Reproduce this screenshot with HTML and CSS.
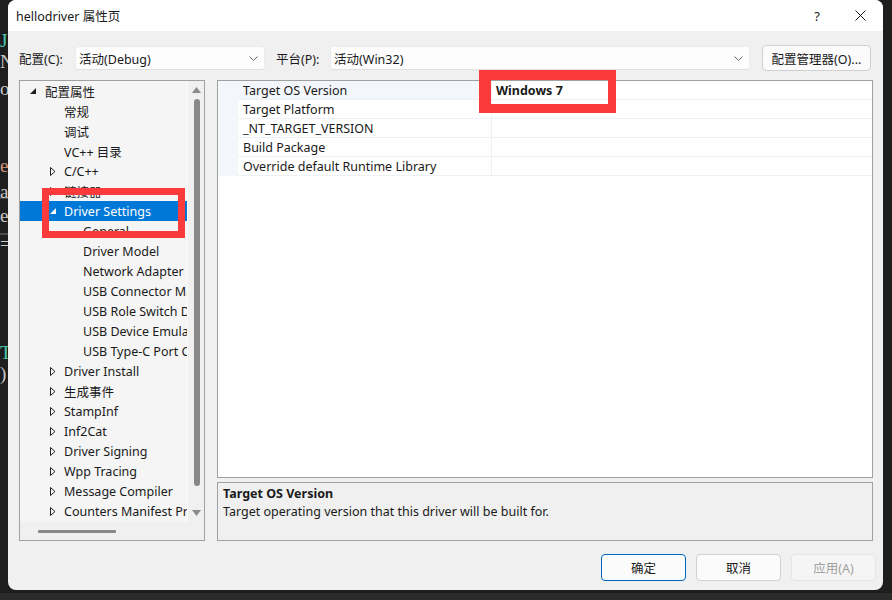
FILE: index.html
```html
<!DOCTYPE html>
<html lang="zh-CN">
<head>
<meta charset="UTF-8">
<meta name="viewport" content="width=device-width, initial-scale=1.0">
<title>hellodriver 属性页</title>
<link rel="stylesheet" href="styles.css">
</head>
<body>

<div class="screen">
    <div class="desk">
        <!-- editor window peeking out behind the dialog -->
        <div class="code">
            <div class="ln c-type l1">J</div>
            <div class="ln l2">N</div>
            <div class="ln l3">o</div>
            <div class="ln c-str l4">e</div>
            <div class="ln l5">a</div>
            <div class="ln cur l6">e</div>
            <div class="ln l7">=</div>
            <div class="ln c-type l8">T</div>
            <div class="ln l9">)</div>
        </div>

        <div class="dialog">
            <div class="titlebar">
                <span class="title">hellodriver 属性页</span>
                <span class="tb-btn tb-help">?</span>
                <span class="tb-btn tb-close">
                    <svg width="11" height="11" viewBox="0 0 11 11"><path d="M0.5 0.5 L10.5 10.5 M10.5 0.5 L0.5 10.5" stroke="#1a1a1a" stroke-width="1" fill="none"/></svg>
                </span>
            </div>

            <div class="body">
                <div class="config-row">
                    <span class="lbl lbl-cfg">配置(C):</span>
                    <div class="combo combo-cfg">
                        <span>活动(Debug)</span>
                        <svg width="9" height="5" viewBox="0 0 9 5"><path d="M0.5 0.5 L4.5 4.5 L8.5 0.5" stroke="#6a6a6a" fill="none"/></svg>
                    </div>
                    <span class="lbl lbl-plat">平台(P):</span>
                    <div class="combo combo-plat">
                        <span>活动(Win32)</span>
                        <svg width="9" height="5" viewBox="0 0 9 5"><path d="M0.5 0.5 L4.5 4.5 L8.5 0.5" stroke="#6a6a6a" fill="none"/></svg>
                    </div>
                    <button class="btn btn-mgr">配置管理器(O)...</button>
                </div>

                <div class="panes">
                    <div class="tree-box">
                        <div class="tree-main">
                            <div class="tree-list">
                                <div class="node lv0"><span class="tw"><svg width="6" height="6" viewBox="0 0 6 6"><polygon points="6,0 6,6 0,6" fill="#1e1e1e"/></svg></span>配置属性</div>
                                <div class="node lv1"><span class="tw"></span>常规</div>
                                <div class="node lv1"><span class="tw"></span>调试</div>
                                <div class="node lv1"><span class="tw"></span>VC++ 目录</div>
                                <div class="node lv1"><span class="tw"><svg width="6" height="9" viewBox="0 0 6 9"><polygon points="0.5,0.5 5,4.5 0.5,8.5" fill="none" stroke="#1e1e1e"/></svg></span>C/C++</div>
                                <div class="node lv1"><span class="tw"><svg width="6" height="9" viewBox="0 0 6 9"><polygon points="0.5,0.5 5,4.5 0.5,8.5" fill="none" stroke="#1e1e1e"/></svg></span>链接器</div>
                                <div class="node lv1 selected"><span class="tw"><svg width="6" height="6" viewBox="0 0 6 6"><polygon points="6,0 6,6 0,6" fill="#fff"/></svg></span>Driver Settings</div>
                                <div class="node lv2"><span class="tw"></span>General</div>
                                <div class="node lv2"><span class="tw"></span>Driver Model</div>
                                <div class="node lv2"><span class="tw"></span>Network Adapter</div>
                                <div class="node lv2"><span class="tw"></span>USB Connector Manager</div>
                                <div class="node lv2"><span class="tw"></span>USB Role Switch Driver</div>
                                <div class="node lv2"><span class="tw"></span>USB Device Emulation</div>
                                <div class="node lv2"><span class="tw"></span>USB Type-C Port Controller</div>
                                <div class="node lv1"><span class="tw"><svg width="6" height="9" viewBox="0 0 6 9"><polygon points="0.5,0.5 5,4.5 0.5,8.5" fill="none" stroke="#1e1e1e"/></svg></span>Driver Install</div>
                                <div class="node lv1"><span class="tw"><svg width="6" height="9" viewBox="0 0 6 9"><polygon points="0.5,0.5 5,4.5 0.5,8.5" fill="none" stroke="#1e1e1e"/></svg></span>生成事件</div>
                                <div class="node lv1"><span class="tw"><svg width="6" height="9" viewBox="0 0 6 9"><polygon points="0.5,0.5 5,4.5 0.5,8.5" fill="none" stroke="#1e1e1e"/></svg></span>StampInf</div>
                                <div class="node lv1"><span class="tw"><svg width="6" height="9" viewBox="0 0 6 9"><polygon points="0.5,0.5 5,4.5 0.5,8.5" fill="none" stroke="#1e1e1e"/></svg></span>Inf2Cat</div>
                                <div class="node lv1"><span class="tw"><svg width="6" height="9" viewBox="0 0 6 9"><polygon points="0.5,0.5 5,4.5 0.5,8.5" fill="none" stroke="#1e1e1e"/></svg></span>Driver Signing</div>
                                <div class="node lv1"><span class="tw"><svg width="6" height="9" viewBox="0 0 6 9"><polygon points="0.5,0.5 5,4.5 0.5,8.5" fill="none" stroke="#1e1e1e"/></svg></span>Wpp Tracing</div>
                                <div class="node lv1"><span class="tw"><svg width="6" height="9" viewBox="0 0 6 9"><polygon points="0.5,0.5 5,4.5 0.5,8.5" fill="none" stroke="#1e1e1e"/></svg></span>Message Compiler</div>
                                <div class="node lv1"><span class="tw"><svg width="6" height="9" viewBox="0 0 6 9"><polygon points="0.5,0.5 5,4.5 0.5,8.5" fill="none" stroke="#1e1e1e"/></svg></span>Counters Manifest Preprocessor</div>
                            </div>
                            <div class="vscroll">
                                <svg width="9" height="6" viewBox="0 0 9 6"><polygon points="4.5,0 9,6 0,6" fill="#8a8a8a"/></svg>
                                <div class="vthumb"></div>
                                <svg class="down" width="9" height="6" viewBox="0 0 9 6"><polygon points="0,0 9,0 4.5,6" fill="#8a8a8a"/></svg>
                            </div>
                        </div>
                        <div class="hscroll"><div class="hthumb"></div></div>
                    </div>

                    <div class="right-col">
                        <div class="grid-box">
                            <div class="prop-row sel">
                                <div class="gutter"></div>
                                <div class="pname">Target OS Version</div>
                                <div class="pval">Windows 7</div>
                            </div>
                            <div class="prop-row">
                                <div class="gutter"></div>
                                <div class="pname">Target Platform</div>
                                <div class="pval"></div>
                            </div>
                            <div class="prop-row">
                                <div class="gutter"></div>
                                <div class="pname">_NT_TARGET_VERSION</div>
                                <div class="pval"></div>
                            </div>
                            <div class="prop-row">
                                <div class="gutter"></div>
                                <div class="pname">Build Package</div>
                                <div class="pval"></div>
                            </div>
                            <div class="prop-row">
                                <div class="gutter"></div>
                                <div class="pname">Override default Runtime Library</div>
                                <div class="pval"></div>
                            </div>
                        </div>
                        <div class="desc-box">
                            <div class="desc-title">Target OS Version</div>
                            <div class="desc-text">Target operating version that this driver will be built for.</div>
                        </div>
                    </div>
                </div>

                <div class="btn-row">
                    <button class="btn btn-ok">确定</button>
                    <button class="btn">取消</button>
                    <button class="btn btn-off">应用(A)</button>
                </div>
            </div>
        </div>
    </div>
    <div class="taskbar"></div>
</div>

<!-- red annotation boxes drawn over the screenshot -->
<div class="mark mark-tree"></div>
<div class="mark mark-value"></div>

</body>
</html>
```

FILE: styles.css
```css
* {
    box-sizing: border-box;
}

body {
    margin: 0;
    background-color: #1e1e1e;
    font-family: "Noto Sans", "Noto Sans CJK SC", sans-serif;
    font-size: 12.5px;
    color: #1a1a1a;
}

.screen {
    width: 892px;
    height: 600px;
    display: flex;
    flex-direction: column;
    overflow: hidden;
}

.desk {
    height: 593px;
    display: flex;
    background-color: #1e1e1e;
}

.taskbar {
    flex: 1;
    background-color: #2b2b2b;
}

/* Editor behind */
.code {
    width: 8px;
    flex: none;
    overflow: hidden;
    font-family: "Liberation Serif", serif;
    font-size: 19px;
    color: #c8c8c8;
}

.code .ln {
    height: 21px;
    line-height: 21px;
    white-space: nowrap;
}

.code .c-type { color: #4ec9b0; }
.code .c-str { color: #ce9178; }

.code .l1 { margin-top: 30px; }
.code .l3 { margin-top: 6px; }
.code .l4 { margin-top: 56px; }
.code .l5 { margin-top: 5px; }
.code .cur {
    margin-top: -5px;
    height: 38px;
    line-height: 34px;
    border-top: 2px solid #4a4a4a;
    border-bottom: 2px solid #4a4a4a;
}
.code .l7 { margin-top: -2px; }
.code .l8 { margin-top: 88px; }

/* Dialog */
.dialog {
    width: 875px;
    height: 590px;
    flex: none;
    display: flex;
    flex-direction: column;
    background-color: #f0f0f0;
    border-radius: 8px;
    overflow: hidden;
}

.titlebar {
    height: 31px;
    flex: none;
    display: flex;
    align-items: center;
    background-color: #fff;
}

.title {
    flex: 1;
    padding-left: 8px;
}

.tb-btn {
    height: 31px;
    display: flex;
    align-items: center;
    justify-content: center;
}

.tb-help {
    width: 40px;
    font-size: 13px;
}

.tb-close {
    width: 46px;
}

.body {
    flex: 1;
    display: flex;
    flex-direction: column;
    padding: 14px 10px 9px 11px;
}

/* Config row */
.config-row {
    height: 26px;
    display: flex;
    align-items: center;
}

.lbl-cfg { width: 56px; }
.lbl-plat { width: 54px; }

.combo {
    height: 24px;
    display: flex;
    align-items: center;
    justify-content: space-between;
    padding: 0 6px 0 3px;
    background-color: #fdfdfd;
    border: 1px solid #ececec;
    border-bottom-color: #e0e0e0;
    border-radius: 4px;
}

.combo-cfg {
    width: 190px;
    margin-right: 11px;
}

.combo-plat {
    width: 420px;
    margin-right: 12px;
}

.btn {
    font-family: inherit;
    font-size: 12.5px;
    color: #1a1a1a;
    background-color: #fbfbfb;
    border: 1px solid #d0d0d0;
    border-radius: 4px;
    padding: 0;
}

.btn-mgr {
    width: 109px;
    height: 26px;
}

/* Panes */
.panes {
    height: 461px;
    margin-top: 9px;
    display: flex;
    gap: 12px;
}

.tree-box {
    width: 186px;
    flex: none;
    display: flex;
    flex-direction: column;
    border: 1px solid #a0a0a0;
}

.tree-main {
    flex: 1;
    display: flex;
    min-height: 0;
}

.tree-list {
    flex: 1;
    overflow: hidden;
    background-color: #f5f5f5;
}

.node {
    height: 20px;
    display: flex;
    align-items: center;
    white-space: nowrap;
}

.node .tw {
    width: 15px;
    flex: none;
    display: flex;
    align-items: center;
}

.node.lv0 { padding-left: 10px; }
.node.lv1 { padding-left: 29px; }
.node.lv2 { padding-left: 48px; }
.node.lv1 .tw svg { margin-left: 1px; }

.node.selected {
    background-color: #0078d7;
    color: #fff;
}

.vscroll {
    width: 17px;
    flex: none;
    display: flex;
    flex-direction: column;
    align-items: center;
    padding: 6px 0 6px 1px;
    background-color: #f0f0f0;
    border-left: 1px solid #fafafa;
}

.vthumb {
    width: 6px;
    height: 387px;
    margin-top: 6px;
    background-color: #888;
    border-radius: 3px;
}

.vscroll .down {
    margin-top: auto;
}

.hscroll {
    height: 18px;
    flex: none;
    display: flex;
    align-items: center;
    padding-left: 18px;
    background-color: #f0f0f0;
}

.hthumb {
    width: 78px;
    height: 3px;
    background-color: #888;
    border-radius: 1px;
}

/* Property grid */
.right-col {
    flex: 1;
    display: flex;
    flex-direction: column;
    gap: 4px;
}

.grid-box {
    height: 398px;
    background-color: #fff;
    border: 1px solid #a0a0a0;
}

.prop-row {
    height: 19px;
    display: flex;
}

.prop-row .gutter {
    width: 20px;
    flex: none;
    background-color: #f3f6fa;
}

.prop-row .pname {
    width: 254px;
    flex: none;
    padding: 2px 0 0 5px;
    line-height: 16px;
    border-bottom: 1px solid #edf0f4;
    border-right: 1px solid #edf0f4;
    white-space: nowrap;
}

.prop-row .pval {
    flex: 1;
    padding: 2px 0 0 4px;
    line-height: 16px;
    border-bottom: 1px solid #edf0f4;
    font-weight: bold;
}

.prop-row.sel .pname {
    background-color: #f3f6fa;
}

.desc-box {
    height: 59px;
    padding: 2px 5px;
    background-color: #f0f0f0;
    border: 1px solid #a0a0a0;
}

.desc-title {
    font-weight: bold;
    line-height: 18px;
}

.desc-text {
    line-height: 18px;
}

/* Bottom buttons */
.btn-row {
    margin-top: 13px;
    margin-right: -3px;
    display: flex;
    justify-content: flex-end;
    gap: 10px;
}

.btn-row .btn {
    width: 85px;
    height: 27px;
}

.btn-row .btn-ok {
    border-color: #0067c0;
}

.btn-row .btn-off {
    color: #a0a0a0;
    background-color: #f5f5f5;
    border-color: #e5e5e5;
}

/* Annotation boxes */
.mark {
    position: absolute;
    border: 7px solid #fb3b3b;
}

.mark-tree {
    left: 42px;
    top: 188px;
    width: 143px;
    height: 50px;
}

.mark-value {
    left: 479px;
    top: 70px;
    width: 137px;
    height: 43px;
    border-width: 10px 8px 9px 12px;
}
```
